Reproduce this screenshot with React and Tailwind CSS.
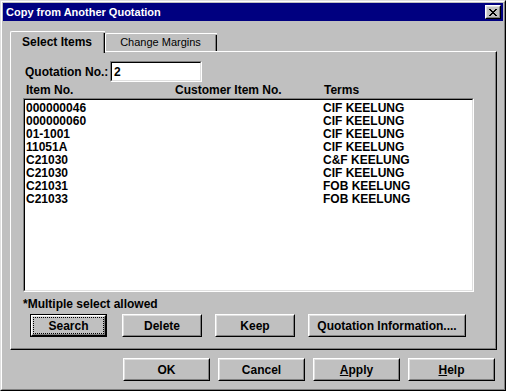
import React from "react";

function Btn({ w, children, def, focus }) {
  const inner = (
    <div className="h-full w-full border border-t-white border-l-white border-r-black border-b-black">
      <div className="h-full w-full border border-t-[#dfdfdf] border-l-[#dfdfdf] border-r-[#808080] border-b-[#808080] flex items-center justify-center">
        {focus ? (
          <div className="h-full w-full border border-dotted border-black flex items-center justify-center">
            {children}
          </div>
        ) : (
          children
        )}
      </div>
    </div>
  );
  return (
    <div className={`${w} h-[23px] text-[12px] font-bold text-black leading-none ${def ? "border border-black" : ""}`}>
      {inner}
    </div>
  );
}

const rows = [
  ["000000046", "", "CIF KEELUNG"],
  ["000000060", "", "CIF KEELUNG"],
  ["01-1001", "", "CIF KEELUNG"],
  ["11051A", "", "CIF KEELUNG"],
  ["C21030", "", "C&F KEELUNG"],
  ["C21030", "", "CIF KEELUNG"],
  ["C21031", "", "FOB KEELUNG"],
  ["C21033", "", "FOB KEELUNG"],
];

export default function App() {
  return (
    <div className="w-[506px] h-[391px] bg-[#c0c0c0] font-['Liberation_Sans',Arial,sans-serif] text-black border border-t-[#dfdfdf] border-l-[#dfdfdf] border-r-black border-b-black">
      <div className="h-full w-full border border-t-white border-l-white border-r-[#808080] border-b-[#808080] p-[1px] flex flex-col">
        {/* Title bar */}
        <div className="h-[18px] bg-[#000080] flex items-center justify-between pl-[3px] pr-[2px]">
          <span className="text-white text-[11px] font-bold leading-none">Copy from Another Quotation</span>
          <div className="w-[16px] h-[14px] border border-t-white border-l-white border-r-black border-b-black">
            <div className="w-full h-full bg-[#c0c0c0] border border-t-[#dfdfdf] border-l-[#dfdfdf] border-r-[#808080] border-b-[#808080] flex items-center justify-center">
              <svg width="8" height="7" viewBox="0 0 8 7" shapeRendering="crispEdges">
                <path d="M0 0h2v1h-2zM6 0h2v1h-2zM1 1h2v1h-2zM5 1h2v1h-2zM2 2h4v1h-4zM3 3h2v1h-2zM2 4h4v1h-4zM1 5h2v1h-2zM5 5h2v1h-2zM0 6h2v1h-2zM6 6h2v1h-2z" fill="#000" />
              </svg>
            </div>
          </div>
        </div>

        {/* Tabs */}
        <div className="mt-[10px] ml-[7px] flex items-end h-[20px] relative z-10">
          <div className="w-[95px] h-[22px] -mb-[2px] bg-[#c0c0c0] border-t border-l border-t-white border-l-white rounded-tl-[2px] flex">
            <div className="flex-1 flex items-center justify-center pb-[2px] text-[12px] font-bold leading-none">
              Select Items
            </div>
            <div className="w-[2px] border-r border-r-black bg-[#808080] mt-[1px]"></div>
          </div>
          <div className="w-[112px] h-[18px] border-t border-l border-t-white border-l-white rounded-tl-[2px] flex">
            <div className="flex-1 flex items-center justify-center text-[11px] leading-none">
              Change Margins
            </div>
            <div className="w-[2px] border-r border-r-black bg-[#808080] mt-[1px]"></div>
          </div>
        </div>

        {/* Panel */}
        <div className="ml-[7px] w-[487px] h-[299px] border border-t-white border-l-white border-r-black border-b-black">
          <div className="h-full w-full border-r border-b border-r-[#808080] border-b-[#808080] flex flex-col">
            {/* Quotation No */}
            <div className="mt-[9px] ml-[14px] flex items-center h-[21px]">
              <span className="w-[85px] text-[12px] font-bold leading-none">Quotation No.:</span>
              <div className="w-[92px] h-[21px] border border-t-[#808080] border-l-[#808080] border-r-white border-b-white">
                <div className="h-full w-full bg-white border border-t-black border-l-black border-r-[#dfdfdf] border-b-[#dfdfdf] flex items-center pl-[2px] text-[12px] font-bold leading-none">
                  2
                </div>
              </div>
            </div>

            {/* Headers */}
            <div className="ml-[15px] h-[16px] flex items-center text-[12px] font-bold leading-none">
              <span className="w-[149px]">Item No.</span>
              <span className="w-[149px]">Customer Item No.</span>
              <span>Terms</span>
            </div>

            {/* List */}
            <div className="ml-[12px] w-[451px] h-[194px] border border-t-[#808080] border-l-[#808080] border-r-white border-b-white">
              <div className="h-full w-full bg-white border border-t-black border-l-black border-r-[#dfdfdf] border-b-[#dfdfdf] pt-[1px] pl-[1px]">
                {rows.map((r, i) => (
                  <div key={i} className="h-[13px] flex items-center text-[12px] font-bold leading-none">
                    <span className="w-[148px]">{r[0]}</span>
                    <span className="w-[149px]">{r[1]}</span>
                    <span>{r[2]}</span>
                  </div>
                ))}
              </div>
            </div>

            <div className="ml-[12px] mt-[4px] h-[15px] flex items-center text-[12px] font-bold leading-none">
              *Multiple select allowed
            </div>

            <div className="mt-[3px] ml-[19px] flex items-center">
              <Btn w="w-[77px]" def focus>Search</Btn>
              <div className="ml-[15px]">
                <Btn w="w-[80px]">Delete</Btn>
              </div>
              <div className="ml-[13px]">
                <Btn w="w-[80px]">Keep</Btn>
              </div>
              <div className="ml-[13px]">
                <Btn w="w-[158px]">Quotation Information....</Btn>
              </div>
            </div>
          </div>
        </div>

        {/* Bottom buttons */}
        <div className="mt-[8px] ml-[120px] flex gap-[8px]">
          <Btn w="w-[87px]">OK</Btn>
          <Btn w="w-[87px]">Cancel</Btn>
          <Btn w="w-[87px]"><span><span className="underline">A</span>pply</span></Btn>
          <Btn w="w-[87px]"><span><span className="underline">H</span>elp</span></Btn>
        </div>
      </div>
    </div>
  );
}
